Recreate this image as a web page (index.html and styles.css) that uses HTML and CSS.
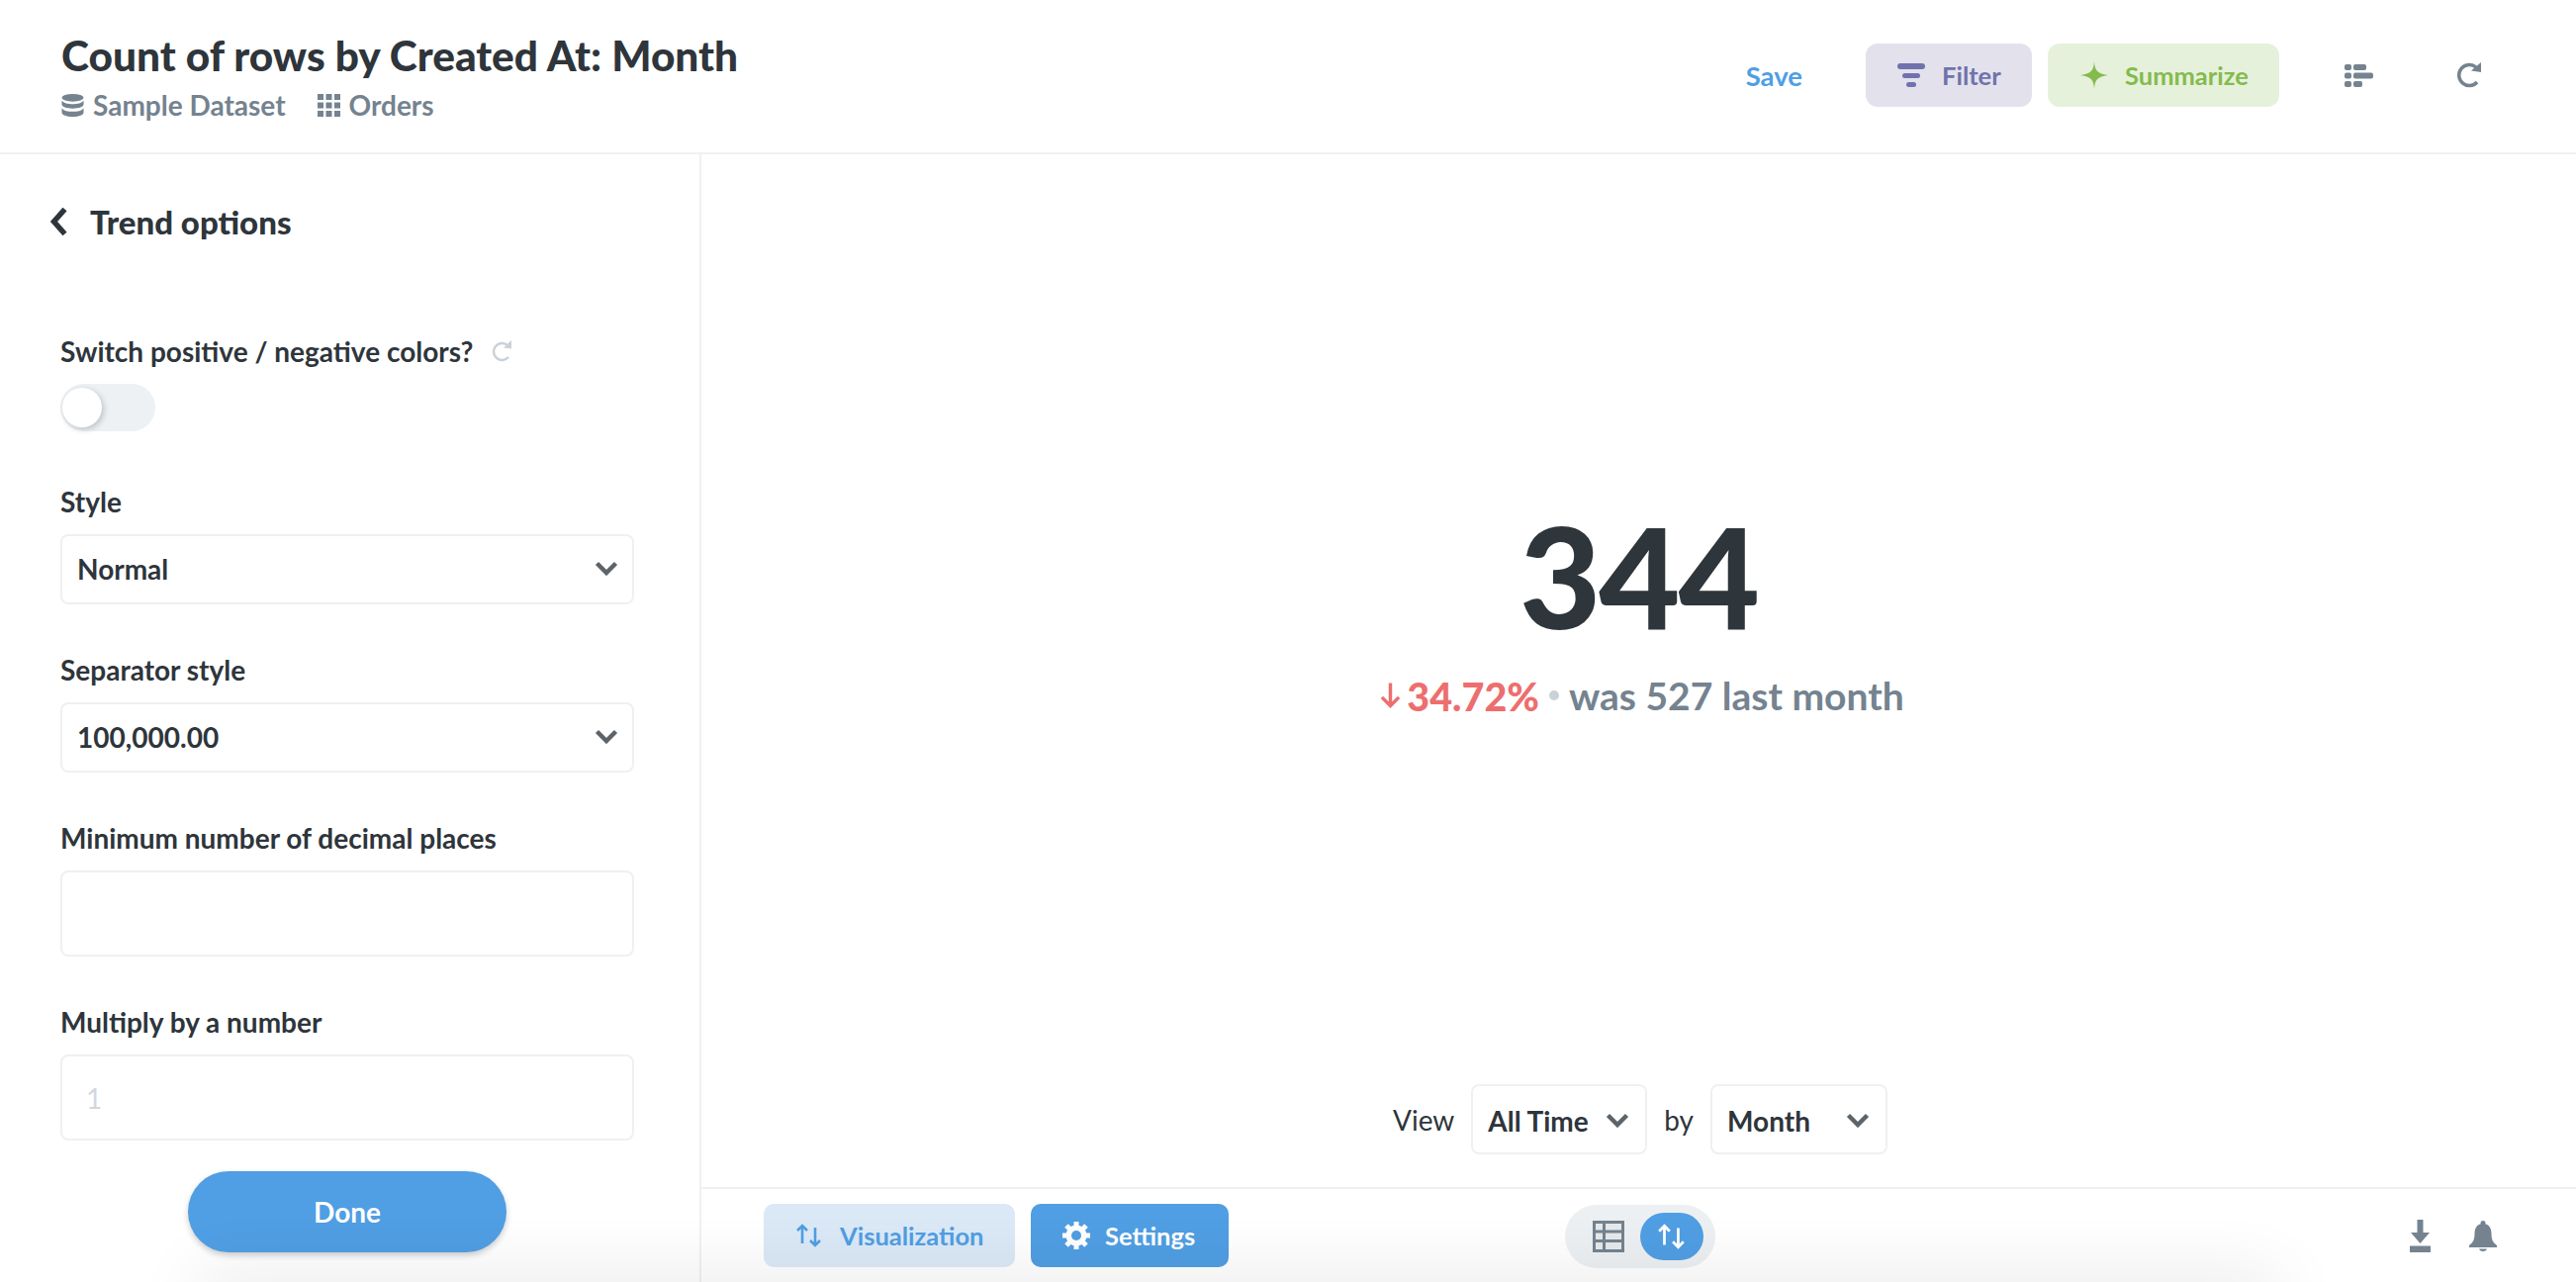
FILE: index.html
```html
<!DOCTYPE html>
<html lang="en">
<head>
    <meta charset="UTF-8">
    <meta name="viewport" content="width=device-width, initial-scale=1.0">
    <title>Count of rows by Created At: Month</title>
    <link rel="stylesheet" href="styles.css">
</head>
<body>
    <div class="app">
        <!-- Header -->
        <header class="header">
            <div class="heading">
                <h1>Count of rows by Created At: Month</h1>
                <div class="crumbs">
                    <span class="crumb">
                        <svg class="crumb-icon" viewBox="0 0 23 24"><ellipse cx="11.5" cy="4" rx="11.5" ry="4" fill="currentColor"/><path d="M0 7c2 2.6 6.500 3.600 11.500 3.600S21 9.600 23 7v4c0 2.500-5 4.300-11.500 4.300S0 13.500 0 11z" fill="currentColor"/><path d="M0 15c2 2.600 6.500 3.600 11.500 3.600S21 17.600 23 15v4.500c0 2.500-5 4.500-11.500 4.500S0 22 0 19.500z" fill="currentColor"/></svg>
                        Sample Dataset
                    </span>
                    <span class="crumb">
                        <svg class="crumb-icon" viewBox="0 0 23 23" fill="currentColor"><rect width="6" height="6"/><rect x="8.500" width="6" height="6"/><rect x="17" width="6" height="6"/><rect y="8.500" width="6" height="6"/><rect x="8.500" y="8.500" width="6" height="6"/><rect x="17" y="8.500" width="6" height="6"/><rect y="17" width="6" height="6"/><rect x="8.500" y="17" width="6" height="6"/><rect x="17" y="17" width="6" height="6"/></svg>
                        Orders
                    </span>
                </div>
            </div>
            <div class="actions">
                <a class="save">Save</a>
                <button class="pill pill-filter">
                    <svg class="pill-icon" viewBox="0 0 28 24" fill="currentColor"><rect width="28" height="6" rx="3"/><rect x="5" y="10" width="18" height="5" rx="2.500"/><rect x="9" y="19" width="10" height="5" rx="2.500"/></svg>
                    Filter
                </button>
                <button class="pill pill-summarize">
                    <svg class="pill-icon" viewBox="0 0 28 28" fill="currentColor"><path d="M14 0c.6 8 2 12.600 14 14-12 1.400-13.400 6-14 14-.6-8-2-12.600-14-14C12 12.600 13.400 8 14 0z"/></svg>
                    Summarize
                </button>
                <svg class="tool-icon tool-sidebar" viewBox="0 0 29 23" fill="currentColor"><rect width="7" height="6" rx="2"/><rect x="9" width="13" height="6" rx="2"/><rect y="8.500" width="7" height="6" rx="2"/><rect x="9" y="8.500" width="20" height="6" rx="2"/><rect y="17" width="7" height="6" rx="2"/><rect x="9" y="17" width="9" height="6" rx="2"/></svg>
                <svg class="tool-icon tool-refresh" viewBox="0 0 26 26"><path d="M21 20a10.500 10.500 0 1 1-1-15" fill="none" stroke="currentColor" stroke-width="3.500"/><path d="M15 8.500 25 10V0z" fill="currentColor"/></svg>
            </div>
        </header>

        <div class="workspace">
            <!-- Trend options -->
            <aside class="sidebar">
                <div class="sidebar-title">
                    <svg class="back-icon" viewBox="0 0 18 30"><path d="M15.500 2.500 4.500 15l11 12.500" fill="none" stroke="currentColor" stroke-width="5.500"/></svg>
                    Trend options
                </div>

                <div class="field field-switch">
                    <label class="field-label">
                        Switch positive / negative colors?
                        <svg class="reset-icon" viewBox="0 0 22 22"><path d="M18 17a8.500 8.500 0 1 1-1-12" fill="none" stroke="currentColor" stroke-width="2.500"/><path d="M13 7.500l8 1V0z" fill="currentColor"/></svg>
                    </label>
                    <div class="toggle"><span class="toggle-knob"></span></div>
                </div>

                <div class="field">
                    <label class="field-label">Style</label>
                    <div class="select">Normal
                        <svg class="chevron" viewBox="0 0 24 15"><path d="M2.500 2.500 12 12l9.500-9.500" fill="none" stroke="currentColor" stroke-width="4.500"/></svg>
                    </div>
                </div>

                <div class="field">
                    <label class="field-label">Separator style</label>
                    <div class="select">100,000.00
                        <svg class="chevron" viewBox="0 0 24 15"><path d="M2.500 2.500 12 12l9.500-9.500" fill="none" stroke="currentColor" stroke-width="4.500"/></svg>
                    </div>
                </div>

                <div class="field">
                    <label class="field-label" for="minDecimals">Minimum number of decimal places</label>
                    <input class="input" type="text" id="minDecimals">
                </div>

                <div class="field">
                    <label class="field-label" for="multiply">Multiply by a number</label>
                    <input class="input" type="text" id="multiply" placeholder="1">
                </div>

                <button class="done">Done</button>
            </aside>

            <main class="content">
                <div class="scalar">
                    <div class="scalar-value">344</div>
                    <div class="trend">
                        <svg class="trend-arrow" viewBox="0 0 22 28"><path d="M11 1v24M2 16l9 9 9-9" fill="none" stroke="currentColor" stroke-width="3.600"/></svg>
                        <span class="trend-pct">34.72%</span>
                        <span class="trend-dot"></span>
                        <span class="trend-prev">was 527 last month</span>
                    </div>
                </div>

                <div class="time-filter">
                    <span class="time-word">View</span>
                    <div class="time-select time-all">All Time
                        <svg class="chevron" viewBox="0 0 24 15"><path d="M2.500 2.500 12 12l9.500-9.500" fill="none" stroke="currentColor" stroke-width="4.500"/></svg>
                    </div>
                    <span class="time-word">by</span>
                    <div class="time-select time-unit">Month
                        <svg class="chevron" viewBox="0 0 24 15"><path d="M2.500 2.500 12 12l9.500-9.500" fill="none" stroke="currentColor" stroke-width="4.500"/></svg>
                    </div>
                </div>

                <!-- Footer bar -->
                <footer class="footer">
                    <div class="footer-left">
                        <button class="foot-btn foot-viz">
                            <svg class="foot-icon" viewBox="0 0 28 24"><path d="M7 20V2M2 7l5-5 5 5M20 4v18M15 17l5 5 5-5" fill="none" stroke="currentColor" stroke-width="2.600"/></svg>
                            Visualization
                        </button>
                        <button class="foot-btn foot-settings">
                            <svg class="foot-icon gear" viewBox="0 0 28 28"><circle cx="14" cy="14" r="7.500" fill="none" stroke="currentColor" stroke-width="6"/><path d="M14 0v28M0 14h28M4 4l20 20M24 4 4 24" stroke="currentColor" stroke-width="5"/><circle cx="14" cy="14" r="5" fill="#509ee3"/></svg>
                            Settings
                        </button>
                    </div>
                    <div class="view-switch">
                        <svg class="table-icon" viewBox="0 0 32 32"><rect width="32" height="32" fill="currentColor"/><path d="M3 3h7v6.500H3zM13 3h16v6.500H13zM3 12.500h7V19H3zM13 12.500h16V19H13zM3 22h7v7H3zM13 22h16v7H13z" fill="#e6e9ec"/></svg>
                        <span class="view-active">
                            <svg class="foot-icon" viewBox="0 0 28 24"><path d="M7 20V2M2 7l5-5 5 5M20 4v18M15 17l5 5 5-5" fill="none" stroke="currentColor" stroke-width="2.600"/></svg>
                        </span>
                    </div>
                    <div class="footer-right">
                        <svg class="download-icon" viewBox="0 0 21 33" fill="currentColor"><path d="M7.500 0h6v13H20l-9.500 11L1 13h6.500z"/><rect y="26.500" width="21" height="6.500"/></svg>
                        <svg class="bell-icon" viewBox="0 0 28 31" fill="currentColor"><circle cx="14" cy="2.500" r="2.500"/><path d="M14 3c5.500 0 8.500 4 8.500 10 0 6 1.500 9 5.500 12v2H0v-2c4-3 5.500-6 5.500-12 0-6 3-10 8.500-10z"/><path d="M10 28.500h8c-.5 1.700-2 2.500-4 2.500s-3.500-.8-4-2.500z"/></svg>
                    </div>
                </footer>
            </main>
        </div>
        <div class="bottom-shade"></div>
    </div>
</body>
</html>
```

FILE: styles.css
```css
* {
    box-sizing: border-box;
}
body {
    font-family: Lato, "Noto Sans", sans-serif;
    font-variant-ligatures: common-ligatures;
    background: white;
    color: #2e353b;
    margin: 0;
}
button {
    font-family: inherit;
    border: none;
    cursor: pointer;
}
svg {
    display: block;
    flex: none;
}
.app {
    position: relative;
    display: flex;
    flex-direction: column;
    height: 1296px;
    overflow: hidden;
}

/* header */
.header {
    display: flex;
    justify-content: space-between;
    height: 156px;
    padding: 28px 95px 0 62px;
    border-bottom: 2px solid #f0f0f0;
}
h1 {
    margin: 0;
    font-size: 42.4px;
    line-height: 56px;
    font-weight: 900;
}
.crumbs {
    display: flex;
    gap: 32px;
    color: #74838f;
    font-size: 28px;
    font-weight: 700;
    line-height: 36px;
    margin-top: 4px;
}
.crumb {
    display: flex;
    align-items: center;
    gap: 9px;
}
.crumb-icon {
    width: 23px;
    height: 23px;
}
.actions {
    display: flex;
    align-items: center;
    height: 64px;
    margin-top: 16px;
}
.save {
    color: #509ee3;
    font-size: 27.500px;
    font-weight: 700;
    margin-right: 64px;
}
.pill {
    display: flex;
    align-items: center;
    height: 64px;
    border-radius: 12px;
    font-size: 25.500px;
    font-weight: 700;
    gap: 17px;
}
.pill-filter {
    width: 168px;
    padding-left: 32px;
    background: #e3e2ec;
    color: #7172ad;
    margin-right: 16px;
}
.pill-summarize {
    width: 234px;
    padding-left: 33px;
    background: #e6f1dc;
    color: #84bb4c;
}
.pill-icon {
    width: 28px;
    height: 28px;
}
.pill-filter .pill-icon {
    height: 24px;
}
.tool-icon {
    color: #74838f;
}
.tool-sidebar {
    width: 29px;
    height: 23px;
    margin-left: 66px;
}
.tool-refresh {
    width: 26px;
    height: 26px;
    margin-left: 84px;
}

/* sidebar */
.workspace {
    display: flex;
    flex: 1;
    min-height: 0;
}
.sidebar {
    width: 709px;
    flex: none;
    border-right: 2px solid #f0f0f0;
    padding: 0 66px 0 61px;
}
.sidebar-title {
    display: flex;
    align-items: center;
    gap: 23px;
    height: 44px;
    margin: 46px 0 0 -11px;
    font-size: 33px;
    font-weight: 900;
}
.back-icon {
    width: 18px;
    height: 30px;
}
.field {
    margin-top: 48px;
}
.field-switch {
    margin-top: 0;
    padding-top: 91px;
}
.field-label {
    display: flex;
    align-items: center;
    gap: 18px;
    height: 36px;
    font-size: 28px;
    font-weight: 700;
    margin-bottom: 15px;
}
.reset-icon {
    width: 22px;
    height: 22px;
    color: #c9d2d9;
}
.toggle {
    width: 96px;
    height: 48px;
    border-radius: 24px;
    background: #edf1f4;
    padding: 4px 0 0 2px;
}
.toggle-knob {
    display: block;
    width: 40px;
    height: 40px;
    border-radius: 50%;
    background: white;
    box-shadow: 2px 2px 6px rgba(0, 0, 0, 0.2);
}
.field-switch + .field {
    margin-top: 53px;
}
.select {
    display: flex;
    align-items: center;
    justify-content: space-between;
    height: 71px;
    padding: 0 14px 2px 15px;
    border: 2px solid #f0f0f0;
    border-radius: 8px;
    font-size: 28px;
    font-weight: 700;
}
.chevron {
    width: 24px;
    height: 15px;
    color: #5c6469;
}
.input {
    display: block;
    width: 100%;
    height: 87px;
    padding: 0 24px;
    border: 2px solid #f0f0f0;
    border-radius: 8px;
    font-family: inherit;
    font-size: 28px;
    outline: none;
}
.input::placeholder {
    color: #d0d8de;
}
.done {
    display: block;
    width: 322px;
    height: 82px;
    margin: 31px auto 0;
    border-radius: 41px;
    background: #509ee3;
    color: white;
    font-size: 28px;
    font-weight: 700;
    box-shadow: 0 3px 6px rgba(0, 0, 0, 0.2);
}

/* main area */
.content {
    flex: 1;
    min-width: 0;
    display: flex;
    flex-direction: column;
}
.scalar {
    flex: 1;
    padding-top: 353px;
    text-align: center;
}
.scalar-value {
    font-size: 142px;
    line-height: 144px;
    font-weight: 900;
    letter-spacing: -2px;
}
.trend {
    display: flex;
    align-items: center;
    justify-content: center;
    height: 48px;
    margin-top: 26px;
    padding-left: 7px;
    font-size: 39.500px;
    font-weight: 900;
    color: #74838f;
}
.trend-arrow {
    width: 21px;
    height: 28px;
    margin-right: 6px;
    color: #ed6e6e;
}
.trend-pct {
    color: #ed6e6e;
}
.trend-dot {
    width: 10px;
    height: 10px;
    border-radius: 50%;
    background: #c9d2d9;
    margin: 0 10px;
}
.trend-prev {
    font-size: 39px;
    font-weight: 700;
}
.time-filter {
    display: flex;
    align-items: center;
    justify-content: center;
    height: 71px;
    margin-bottom: 33px;
    padding-right: 14px;
    font-size: 28px;
}
.time-word {
    margin: 0 17px;
}
.time-select {
    display: flex;
    align-items: center;
    justify-content: space-between;
    height: 71px;
    padding: 2px 16px 0 15px;
    border: 2px solid #f0f0f0;
    border-radius: 8px;
    font-weight: 700;
}
.time-all {
    width: 178px;
}
.time-unit {
    width: 179px;
}
.footer {
    display: flex;
    align-items: center;
    justify-content: space-between;
    height: 96px;
    flex: none;
    padding: 0 80px 0 63px;
    border-top: 2px solid #f0f0f0;
    position: relative;
}
.footer-left {
    display: flex;
    gap: 16px;
}
.foot-btn {
    display: flex;
    align-items: center;
    height: 64px;
    border-radius: 10px;
    font-size: 25.500px;
    font-weight: 700;
}
.foot-viz {
    width: 254px;
    padding-left: 32px;
    gap: 17px;
    background: #dbe9f7;
    color: #509ee3;
}
.foot-settings {
    width: 200px;
    padding-left: 32px;
    gap: 15px;
    background: #509ee3;
    color: white;
}
.foot-icon {
    width: 28px;
    height: 24px;
}
.gear {
    height: 28px;
}
.view-switch {
    position: absolute;
    left: 873px;
    top: 16px;
    display: flex;
    align-items: center;
    justify-content: space-between;
    width: 152px;
    height: 64px;
    padding: 0 12px 0 28px;
    border-radius: 32px;
    background: #edf0f2;
}
.table-icon {
    width: 32px;
    height: 32px;
    color: #74838f;
}
.view-active {
    display: flex;
    align-items: center;
    justify-content: center;
    width: 64px;
    height: 48px;
    border-radius: 24px;
    background: #509ee3;
    color: white;
}
.view-active .foot-icon {
    width: 30px;
    height: 26px;
}
.footer-right {
    display: flex;
    align-items: center;
    gap: 39px;
    color: #74838f;
}
.download-icon {
    width: 21px;
    height: 33px;
}
.bell-icon {
    width: 28px;
    height: 31px;
}

/* soft shadow along the bottom of the window */
.bottom-shade {
    position: absolute;
    left: 200px;
    right: 300px;
    bottom: -30px;
    height: 30px;
    box-shadow: 0 0 70px rgba(0, 0, 0, 0.14);
    pointer-events: none;
}
```
